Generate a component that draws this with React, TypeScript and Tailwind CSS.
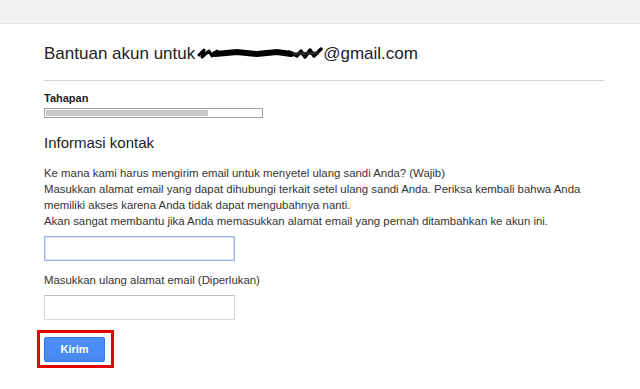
import React from "react";

function Scribble() {
  return (
    <svg width="126" height="18" viewBox="0 0 126 18" className="block ml-[2px] shrink-0">
      <path d="M2 11 L7 6 L5 13 L12 7 L15 12 L20 7" stroke="#000" strokeWidth="3" fill="none" strokeLinejoin="round" strokeLinecap="round" />
      <path d="M18 10 L40 8 L60 10 L80 8 L94 10" stroke="#000" strokeWidth="6" fill="none" strokeLinecap="round" />
      <path d="M92 8 L100 12 L104 7 L108 13 L113 6 L117 12 L124 5" stroke="#000" strokeWidth="3.5" fill="none" strokeLinejoin="round" strokeLinecap="round" />
      <path d="M96 10 L122 9" stroke="#222" strokeWidth="3" fill="none" />
    </svg>
  );
}

export default function App() {
  return (
    <div className="w-[640px] h-[389px] bg-white overflow-hidden" style={{ fontFamily: '"Liberation Sans", Arial, sans-serif' }}>
      <div className="h-[24px] bg-[#f1f1f1] border-b border-[#e5e5e5]" />
      <div className="pl-[44px] w-[604px]">
        <div className="pt-[20px] h-[56px] text-[17px] text-[#222] leading-[20px] flex items-start">
          <span>Bantuan akun untuk</span>
          <Scribble />
          <span>@gmail.com</span>
        </div>
        <div className="border-t border-[#d4d4d4]" />
        <div className="mt-[11px] text-[11px] font-bold text-[#222] leading-[13px]">Tahapan</div>
        <div className="mt-[3px] w-[219px] h-[10px] border border-[#a0a0a0] p-[1px] bg-white">
          <div className="w-[162px] h-full bg-[#c8c8c8]" />
        </div>
        <div className="mt-[16px] text-[15px] text-[#222] leading-[18px]">Informasi kontak</div>
        <div className="mt-[13px] text-[11.4px] text-[#333] leading-[16px] whitespace-nowrap">
          <div>Ke mana kami harus mengirim email untuk menyetel ulang sandi Anda? (Wajib)</div>
          <div>Masukkan alamat email yang dapat dihubungi terkait setel ulang sandi Anda. Periksa kembali bahwa Anda</div>
          <div>memiliki akses karena Anda tidak dapat mengubahnya nanti.</div>
          <div>Akan sangat membantu jika Anda memasukkan alamat email yang pernah ditambahkan ke akun ini.</div>
        </div>
        <div className="mt-[7px] w-[191px] h-[25px] border border-[#9fb6ec] shadow-[inset_0_0_0_1px_#d3def7]" />
        <div className="mt-[12px] text-[11.4px] text-[#333] leading-[14px]">Masukkan ulang alamat email (Diperlukan)</div>
        <div className="mt-[8px] w-[191px] h-[25px] border border-[#d9d9d9] border-t-[#c0c0c0]" />
        <div className="mt-[10px] -ml-[7px] w-[77px] h-[38px] border-[3px] border-[#e60000] pl-[4px] pt-[4px]">
          <div className="w-[61px] h-[25px] rounded-[2px] border border-[#3079ed] bg-gradient-to-b from-[#4d90fe] to-[#4787ed] text-white text-[11px] font-bold flex items-center justify-center">
            Kirim
          </div>
        </div>
      </div>
    </div>
  );
}
